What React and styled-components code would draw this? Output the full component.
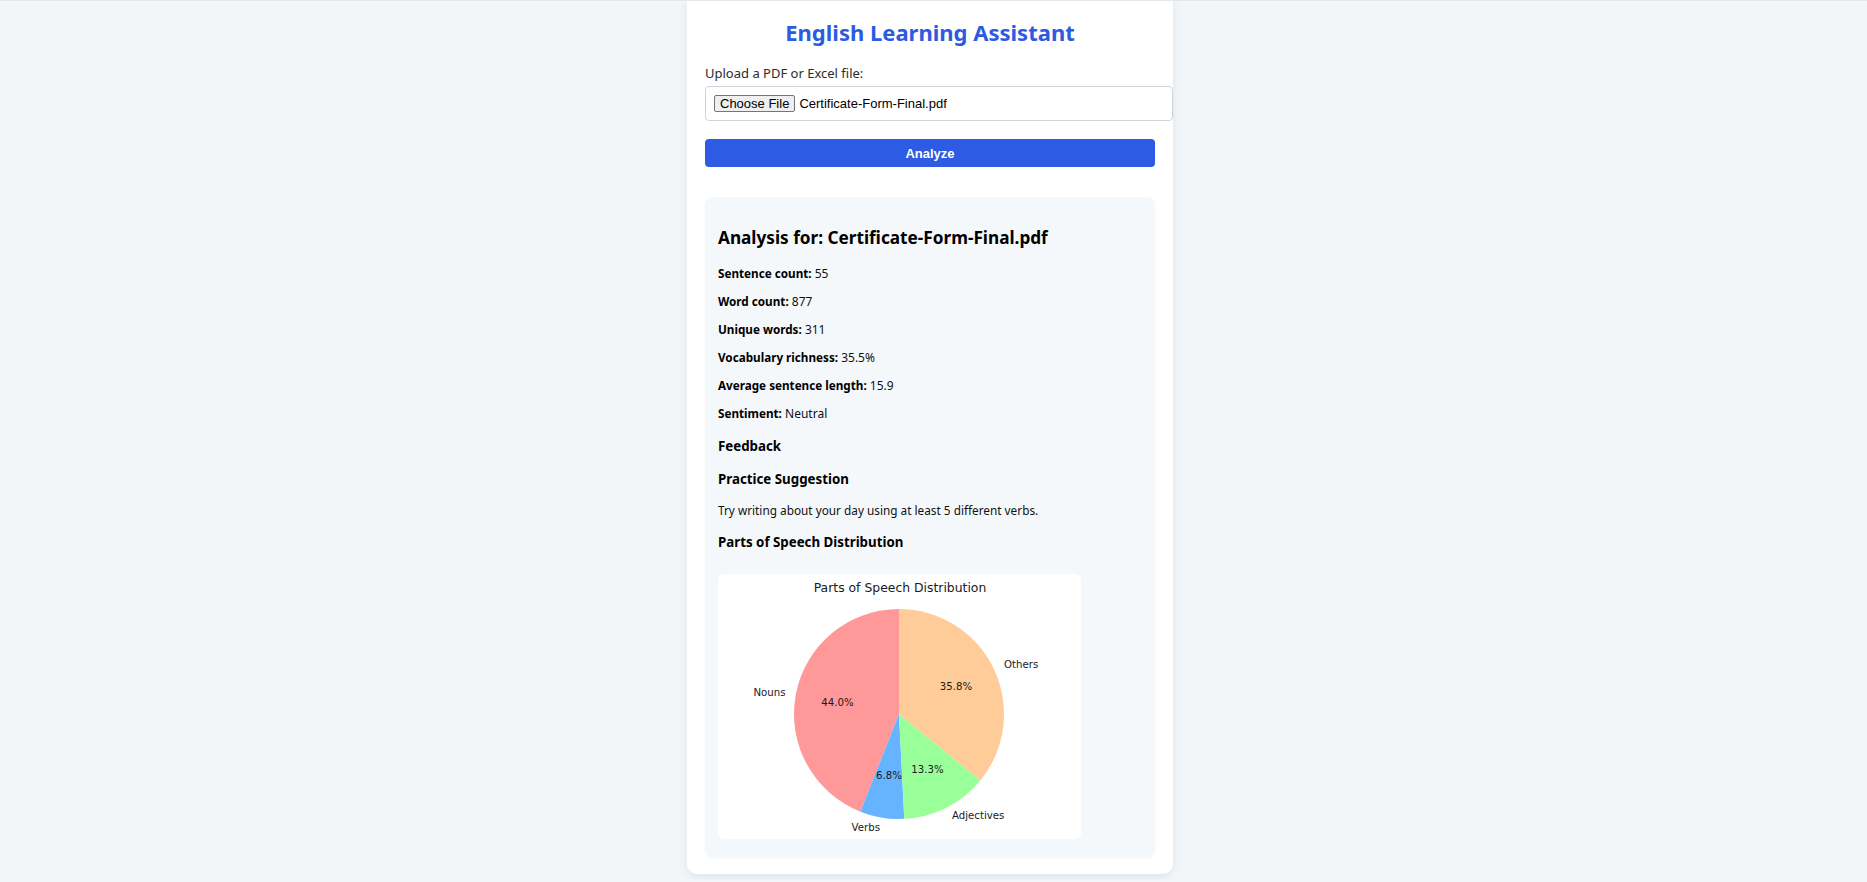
import React from "react";
import styled, { createGlobalStyle } from "styled-components";

const Global = createGlobalStyle`
  html, body { margin: 0; padding: 0; }
  body {
    background: #f3f6f9;
    border-top: 1px solid #e4e8ec;
    font-family: "Noto Sans", "Open Sans", sans-serif;
    color: #111;
    padding-right: 7px;
    min-height: 881px;
    box-sizing: border-box;
  }
`;

const Card = styled.main`
  width: 486px;
  margin: -1px auto 0;
  box-sizing: border-box;
  background: #fff;
  border-radius: 0 0 10px 10px;
  box-shadow: 0 2px 10px rgba(30, 50, 80, 0.1);
  padding: 12px 18px 17px;
`;

const Title = styled.h1`
  margin: 0;
  text-align: center;
  font-size: 22px;
  line-height: 40px;
  font-weight: 700;
  color: #2c5bdf;
`;

const Label = styled.label`
  display: block;
  margin-top: 12px;
  font-size: 13px;
  line-height: 18px;
  color: #2b2b2b;
`;

const FileBox = styled.div`
  margin-top: 4px;
  width: 100%;
  padding: 0 8px;
  height: 33px;
  box-sizing: content-box;
  display: flex;
  align-items: center;
  gap: 4px;
  border: 1px solid #cfd3d8;
  border-radius: 4px;
  background: #fff;
  margin-right: -18px;
`;

const ChooseButton = styled.span`
  display: inline-flex;
  align-items: center;
  height: 17px;
  padding: 0 5px;
  box-sizing: border-box;
  background: #efefef;
  border: 1px solid #767676;
  border-radius: 2px;
  font-family: "Liberation Sans", Arial, sans-serif;
  font-size: 13px;
  color: #000;
`;

const FileName = styled.span`
  font-family: "Liberation Sans", Arial, sans-serif;
  font-size: 13px;
  color: #000;
`;

const AnalyzeButton = styled.button`
  display: block;
  width: 100%;
  margin-top: 18px;
  height: 28px;
  border: none;
  border-radius: 4px;
  background: #2d5be3;
  color: #fff;
  font-family: "Liberation Sans", Arial, sans-serif;
  font-weight: 700;
  font-size: 13px;
`;

const Results = styled.section`
  margin-top: 30px;
  background: #f5f8fb;
  border-radius: 8px;
  padding: 29px 13px 18px;
  box-shadow: 0 1px 3px rgba(30, 50, 80, 0.04);
`;

const ResultTitle = styled.h2`
  margin: 0;
  font-size: 17.2px;
  line-height: 24px;
  font-weight: 700;
  color: #000;
`;

const Stat = styled.p`
  margin: ${(p) => (p.$first ? "15px" : "10px")} 0 0;
  height: 18px;
  font-size: 12px;
  line-height: 18px;
  color: #111;
  b { font-weight: 700; font-size: 11.7px; line-height: 1; color: #000; }
`;

const SubHeading = styled.h3`
  margin: 13px 0 0;
  font-size: 13.3px;
  line-height: 20px;
  font-weight: 700;
  color: #000;
`;

const Text = styled.p`
  margin: 12px 0 0;
  font-size: 11.8px;
  line-height: 18px;
  color: #111;
`;

const ChartCard = styled.div`
  margin-top: 22px;
  width: 363px;
  height: 265px;
  background: #fff;
  border-radius: 6px;
  overflow: hidden;
`;

const ChartSvg = styled.svg`
  display: block;
  font-family: "DejaVu Sans", sans-serif;
`;

const stats = [
  ["Sentence count:", "55"],
  ["Word count:", "877"],
  ["Unique words:", "311"],
  ["Vocabulary richness:", "35.5%"],
  ["Average sentence length:", "15.9"],
  ["Sentiment:", "Neutral"],
];

function PieChart() {
  return (
    <ChartSvg width="363" height="265" viewBox="0 0 363 265">
      <text x="182" y="17.5" textAnchor="middle" fontSize="12.4" fill="#1a1a1a">
        Parts of Speech Distribution
      </text>
      <path d="M181,140 L181,35 A105,105 0 0 0 142.35,237.63 Z" fill="#ff9999" />
      <path d="M181,140 L142.35,237.63 A105,105 0 0 0 186.27,244.87 Z" fill="#66b3ff" />
      <path d="M181,140 L186.27,244.87 A105,105 0 0 0 262.33,206.4 Z" fill="#99ff99" />
      <path d="M181,140 L262.33,206.4 A105,105 0 0 0 181,35 Z" fill="#ffcc99" />
      <g fontSize="10.2" fill="#1a1a1a">
        <text x="67.5" y="122" textAnchor="end">Nouns</text>
        <text x="162" y="257" textAnchor="end">Verbs</text>
        <text x="234" y="245" textAnchor="start">Adjectives</text>
        <text x="286" y="94" textAnchor="start">Others</text>
        <text x="119.5" y="131.5" textAnchor="middle">44.0%</text>
        <text x="171" y="205" textAnchor="middle">6.8%</text>
        <text x="209.5" y="199" textAnchor="middle">13.3%</text>
        <text x="238" y="116" textAnchor="middle">35.8%</text>
      </g>
    </ChartSvg>
  );
}

export default function App() {
  return (
    <>
      <Global />
      <Card>
        <Title>English Learning Assistant</Title>
        <Label>Upload a PDF or Excel file:</Label>
        <FileBox>
          <ChooseButton>Choose File</ChooseButton>
          <FileName>Certificate-Form-Final.pdf</FileName>
        </FileBox>
        <AnalyzeButton>Analyze</AnalyzeButton>
        <Results>
          <ResultTitle>Analysis for: Certificate-Form-Final.pdf</ResultTitle>
          {stats.map(([k, v], i) => (
            <Stat key={k} $first={i === 0}>
              <b>{k}</b> {v}
            </Stat>
          ))}
          <SubHeading>Feedback</SubHeading>
          <SubHeading>Practice Suggestion</SubHeading>
          <Text>Try writing about your day using at least 5 different verbs.</Text>
          <SubHeading>Parts of Speech Distribution</SubHeading>
          <ChartCard>
            <PieChart />
          </ChartCard>
        </Results>
      </Card>
    </>
  );
}
